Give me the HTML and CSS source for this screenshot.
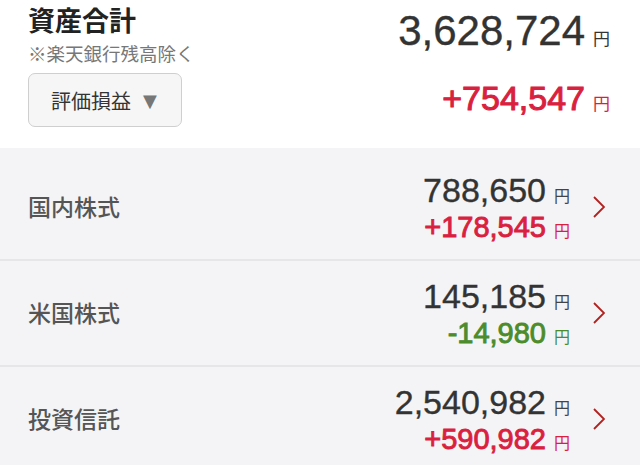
FILE: index.html
```html
<!DOCTYPE html>
<html lang="ja">
<head>
<meta charset="utf-8">
<title>資産合計</title>
<link rel="stylesheet" href="styles.css">
</head>
<body>
<header class="summary">
  <div class="summary-left">
    <h1 class="title">資産合計</h1>
    <p class="note">※楽天銀行残高除く</p>
    <button class="select-btn" type="button"><span>評価損益</span><span class="tri">▼</span></button>
  </div>
  <div class="summary-right">
    <div class="amount-line total">
      <span class="num">3,628,724</span><span class="yen">円</span>
    </div>
    <div class="amount-line gain plus">
      <span class="num">+754,547</span><span class="yen">円</span>
    </div>
  </div>
</header>
<ul class="list">
  <li class="row">
    <span class="label">国内株式</span>
    <div class="values">
      <div class="val-line main"><span class="num">788,650</span><span class="yen">円</span></div>
      <div class="val-line sub plus"><span class="num">+178,545</span><span class="yen">円</span></div>
    </div>
    <svg class="chev" width="12" height="22" viewBox="0 0 12 22"><polyline points="1,1 11,11 1,21" fill="none" stroke="#b3211e" stroke-width="1.8"/></svg>
  </li>
  <li class="row">
    <span class="label">米国株式</span>
    <div class="values">
      <div class="val-line main"><span class="num">145,185</span><span class="yen">円</span></div>
      <div class="val-line sub minus"><span class="num">-14,980</span><span class="yen">円</span></div>
    </div>
    <svg class="chev" width="12" height="22" viewBox="0 0 12 22"><polyline points="1,1 11,11 1,21" fill="none" stroke="#b3211e" stroke-width="1.8"/></svg>
  </li>
  <li class="row">
    <span class="label">投資信託</span>
    <div class="values">
      <div class="val-line main"><span class="num">2,540,982</span><span class="yen">円</span></div>
      <div class="val-line sub plus"><span class="num">+590,982</span><span class="yen">円</span></div>
    </div>
    <svg class="chev" width="12" height="22" viewBox="0 0 12 22"><polyline points="1,1 11,11 1,21" fill="none" stroke="#b3211e" stroke-width="1.8"/></svg>
  </li>
</ul>
</body>
</html>
```

FILE: styles.css
```css
html, body {
  margin: 0;
  padding: 0;
}
body {
  background: #f4f4f6;
  font-family: "Noto Sans CJK JP", "Liberation Sans", sans-serif;
  color: #333;
  overflow: hidden;
}
.summary {
  background: #fff;
  height: 148px;
  display: flex;
  justify-content: space-between;
  padding: 0 30px 0 28px;
  box-sizing: border-box;
}
.summary-left {
  display: flex;
  flex-direction: column;
  align-items: flex-start;
}
.title {
  margin: 0;
  font-size: 27px;
  line-height: 40px;
  font-weight: 700;
  color: #222;
}
.note {
  margin: 0;
  font-size: 18.5px;
  line-height: 26px;
  color: #777;
}
.select-btn {
  margin-top: 7px;
  width: 154px;
  height: 54px;
  box-sizing: border-box;
  border: 1.5px solid #cfcfcf;
  border-radius: 7px;
  background: #f6f6f6;
  display: flex;
  align-items: center;
  justify-content: center;
  gap: 12px;
  font-family: "Noto Sans CJK JP", sans-serif;
  font-size: 20px;
  color: #333;
  padding: 0 2px 0 0;
}
.tri {
  color: #777;
  font-size: 18px;
  font-family: "DejaVu Sans", sans-serif;
}
.summary-right {
  display: flex;
  flex-direction: column;
  align-items: flex-end;
}
.amount-line,
.val-line {
  display: flex;
  align-items: baseline;
  justify-content: flex-end;
  gap: 8px;
}
.num {
  font-family: "Liberation Sans", Arial, sans-serif;
  line-height: 1;
  -webkit-text-stroke: 0.35px currentColor;
}
.yen {
  font-family: "Noto Sans CJK JP", sans-serif;
  line-height: 1;
}
.total {
  margin-top: 10px;
}
.total .num {
  font-size: 42px;
  color: #333;
}
.total .yen {
  font-size: 17px;
  color: #333;
}
.gain {
  margin-top: 29px;
}
.gain .num {
  font-size: 34px;
  -webkit-text-stroke: 1px currentColor;
}
.gain .yen {
  font-size: 17px;
}
.plus {
  color: #d9213f;
}
.minus {
  color: #4c8c2b;
}
.list {
  list-style: none;
  margin: 0;
  padding: 7px 0 0;
}
.row {
  height: 104px;
  border-bottom: 2px solid #e6e6e8;
  display: flex;
  align-items: center;
  padding: 0 35px 0 28px;
}
.label {
  flex: 1;
  font-size: 23px;
  font-weight: 500;
  color: #555;
  margin-top: -3px;
}
.values {
  display: flex;
  flex-direction: column;
  align-items: flex-end;
}
.val-line.main .num {
  font-size: 34px;
  color: #333;
}
.val-line.main .yen {
  font-size: 16px;
  color: #444;
}
.val-line.sub {
  margin-top: 6px;
}
.val-line.sub .num {
  font-size: 29px;
  -webkit-text-stroke: 0.9px currentColor;
}
.val-line.sub .yen {
  font-size: 16px;
}
.chev {
  margin-left: 23px;
  flex: none;
}
```
